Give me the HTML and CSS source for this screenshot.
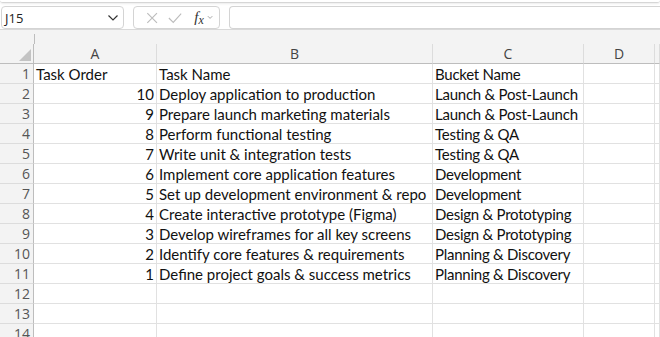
FILE: index.html
```html
<!DOCTYPE html>
<html lang="en">
<head>
    <meta charset="UTF-8">
    <title>Task Plan</title>
    <link rel="stylesheet" href="styles.css">
</head>
<body>
    <div class="ribbon-edge"></div>

    <div class="formula-bar">
        <div class="name-box">
            <span>J15</span>
            <svg width="12" height="8" viewBox="0 0 12 8"><path d="M1.5 1.5 L6 6 L10.5 1.5" fill="none" stroke="#333" stroke-width="1.2"/></svg>
        </div>
        <div class="fx-box">
            <svg width="14" height="14" viewBox="0 0 14 14"><path d="M1.5 1.5 L12.5 12.5 M12.5 1.5 L1.5 12.5" stroke="#bcbcbc" stroke-width="1.3"/></svg>
            <svg width="16" height="14" viewBox="0 0 16 14"><path d="M1 7 L6 12 L15 2" fill="none" stroke="#bcbcbc" stroke-width="1.3"/></svg>
            <span class="fx">f<span class="fx-x">x</span></span>
            <svg width="7" height="5" viewBox="0 0 7 5"><path d="M1 1 L3.5 3.5 L6 1" fill="none" stroke="#999" stroke-width="1"/></svg>
        </div>
        <div class="formula-input"></div>
    </div>

    <div class="sheet">
        <div class="band">
            <div class="corner-top"></div>
        </div>
        <div class="grid" id="grid"></div>
    </div>

    <script>
        const rows = [
            ["Task Order", "Task Name", "Bucket Name"],
            [10, "Deploy application to production", "Launch & Post-Launch"],
            [9, "Prepare launch marketing materials", "Launch & Post-Launch"],
            [8, "Perform functional testing", "Testing & QA"],
            [7, "Write unit & integration tests", "Testing & QA"],
            [6, "Implement core application features", "Development"],
            [5, "Set up development environment & repo", "Development"],
            [4, "Create interactive prototype (Figma)", "Design & Prototyping"],
            [3, "Develop wireframes for all key screens", "Design & Prototyping"],
            [2, "Identify core features & requirements", "Planning & Discovery"],
            [1, "Define project goals & success metrics", "Planning & Discovery"],
            ["", "", ""],
            ["", "", ""],
            ["", "", ""]
        ];

        const grid = document.getElementById('grid');

        function addCell(cls, text) {
            const div = document.createElement('div');
            div.className = cls;
            div.textContent = text;
            grid.appendChild(div);
        }

        // column headers
        addCell('head corner', '');
        ['A', 'B', 'C', 'D', ''].forEach(l => addCell('head col', l));

        rows.forEach((r, i) => {
            addCell('head row', i + 1);
            addCell(typeof r[0] === 'number' ? 'cell num' : 'cell', r[0]);
            addCell('cell', r[1]);
            addCell('cell bucket', r[2]);
            addCell('cell', '');
            addCell('cell', '');
        });
    </script>
</body>
</html>
```

FILE: styles.css
```css
body {
    margin: 0;
    background: #fff;
    font-family: "Segoe UI", "Open Sans", sans-serif;
    overflow: hidden;
}
.ribbon-edge {
    height: 2px;
    border-bottom: 1px solid #d6d6d6;
    border-radius: 0 0 6px 6px;
    box-shadow: 0 1px 2px rgba(0,0,0,0.08);
}
.formula-bar {
    display: flex;
    align-items: flex-start;
    gap: 9px;
    height: 23px;
    padding: 3px 0 0 1px;
    border-bottom: 1px solid #d9d9d9;
}
.name-box, .fx-box, .formula-input {
    height: 23px;
    border: 1px solid #d4d4d4;
    border-radius: 4px;
    box-sizing: border-box;
    display: flex;
    align-items: center;
}
.name-box {
    width: 123px;
    justify-content: space-between;
    padding: 0 4px 0 3px;
    font-size: 13px;
    color: #222;
}
.fx-box {
    width: 87px;
    padding: 0 6px 0 12px;
    gap: 10px;
}
.fx {
    font-family: "Liberation Serif", serif;
    font-style: italic;
    font-size: 15px;
    color: #333;
    margin-left: 2px;
    margin-right: -7px;
}
.fx-x {
    font-size: 12px;
    position: relative;
    top: 2px;
}
.formula-input {
    flex: 1;
    border-right: none;
    border-radius: 4px 0 0 4px;
}
.sheet {
    background: #f3f3f3;
}
.band {
    height: 14px;
    position: relative;
}
.corner-top {
    position: absolute;
    left: 34px;
    top: 4px;
    width: 1px;
    height: 10px;
    background: #bdbdbd;
}
.grid {
    display: grid;
    grid-template-columns: 34px 123px 276px 151px 71px 1fr;
    grid-auto-rows: 20px;
    background: #fff;
}
.head {
    background: #f3f3f3;
    color: #555;
    font-size: 14px;
    box-sizing: border-box;
}
.head.col {
    border-right: 1px solid #dcdcdc;
    border-bottom: 1px solid #bdbdbd;
    text-align: center;
    line-height: 19px;
    color: #444;
}
.head.corner {
    border-right: 1px solid #bdbdbd;
    border-bottom: 1px solid #bdbdbd;
    position: relative;
}
.head.corner::after {
    content: "";
    position: absolute;
    right: 2px;
    bottom: 2px;
    border-style: solid;
    border-width: 0 0 12px 12px;
    border-color: transparent transparent #c3c3c3 transparent;
}
.head.row {
    border-right: 1px solid #bdbdbd;
    border-bottom: 1px solid #dcdcdc;
    text-align: right;
    padding-right: 3px;
    line-height: 20px;
}
.cell {
    box-sizing: border-box;
    border-right: 1px solid #e1e1e1;
    border-bottom: 1px solid #e1e1e1;
    font-family: Lato, "Liberation Sans", sans-serif;
    font-size: 15px;
    color: #111;
    padding: 0 2px;
    line-height: 20px;
    white-space: nowrap;
}
.cell.num {
    text-align: right;
}
.cell.bucket {
    letter-spacing: -0.25px;
}
```
